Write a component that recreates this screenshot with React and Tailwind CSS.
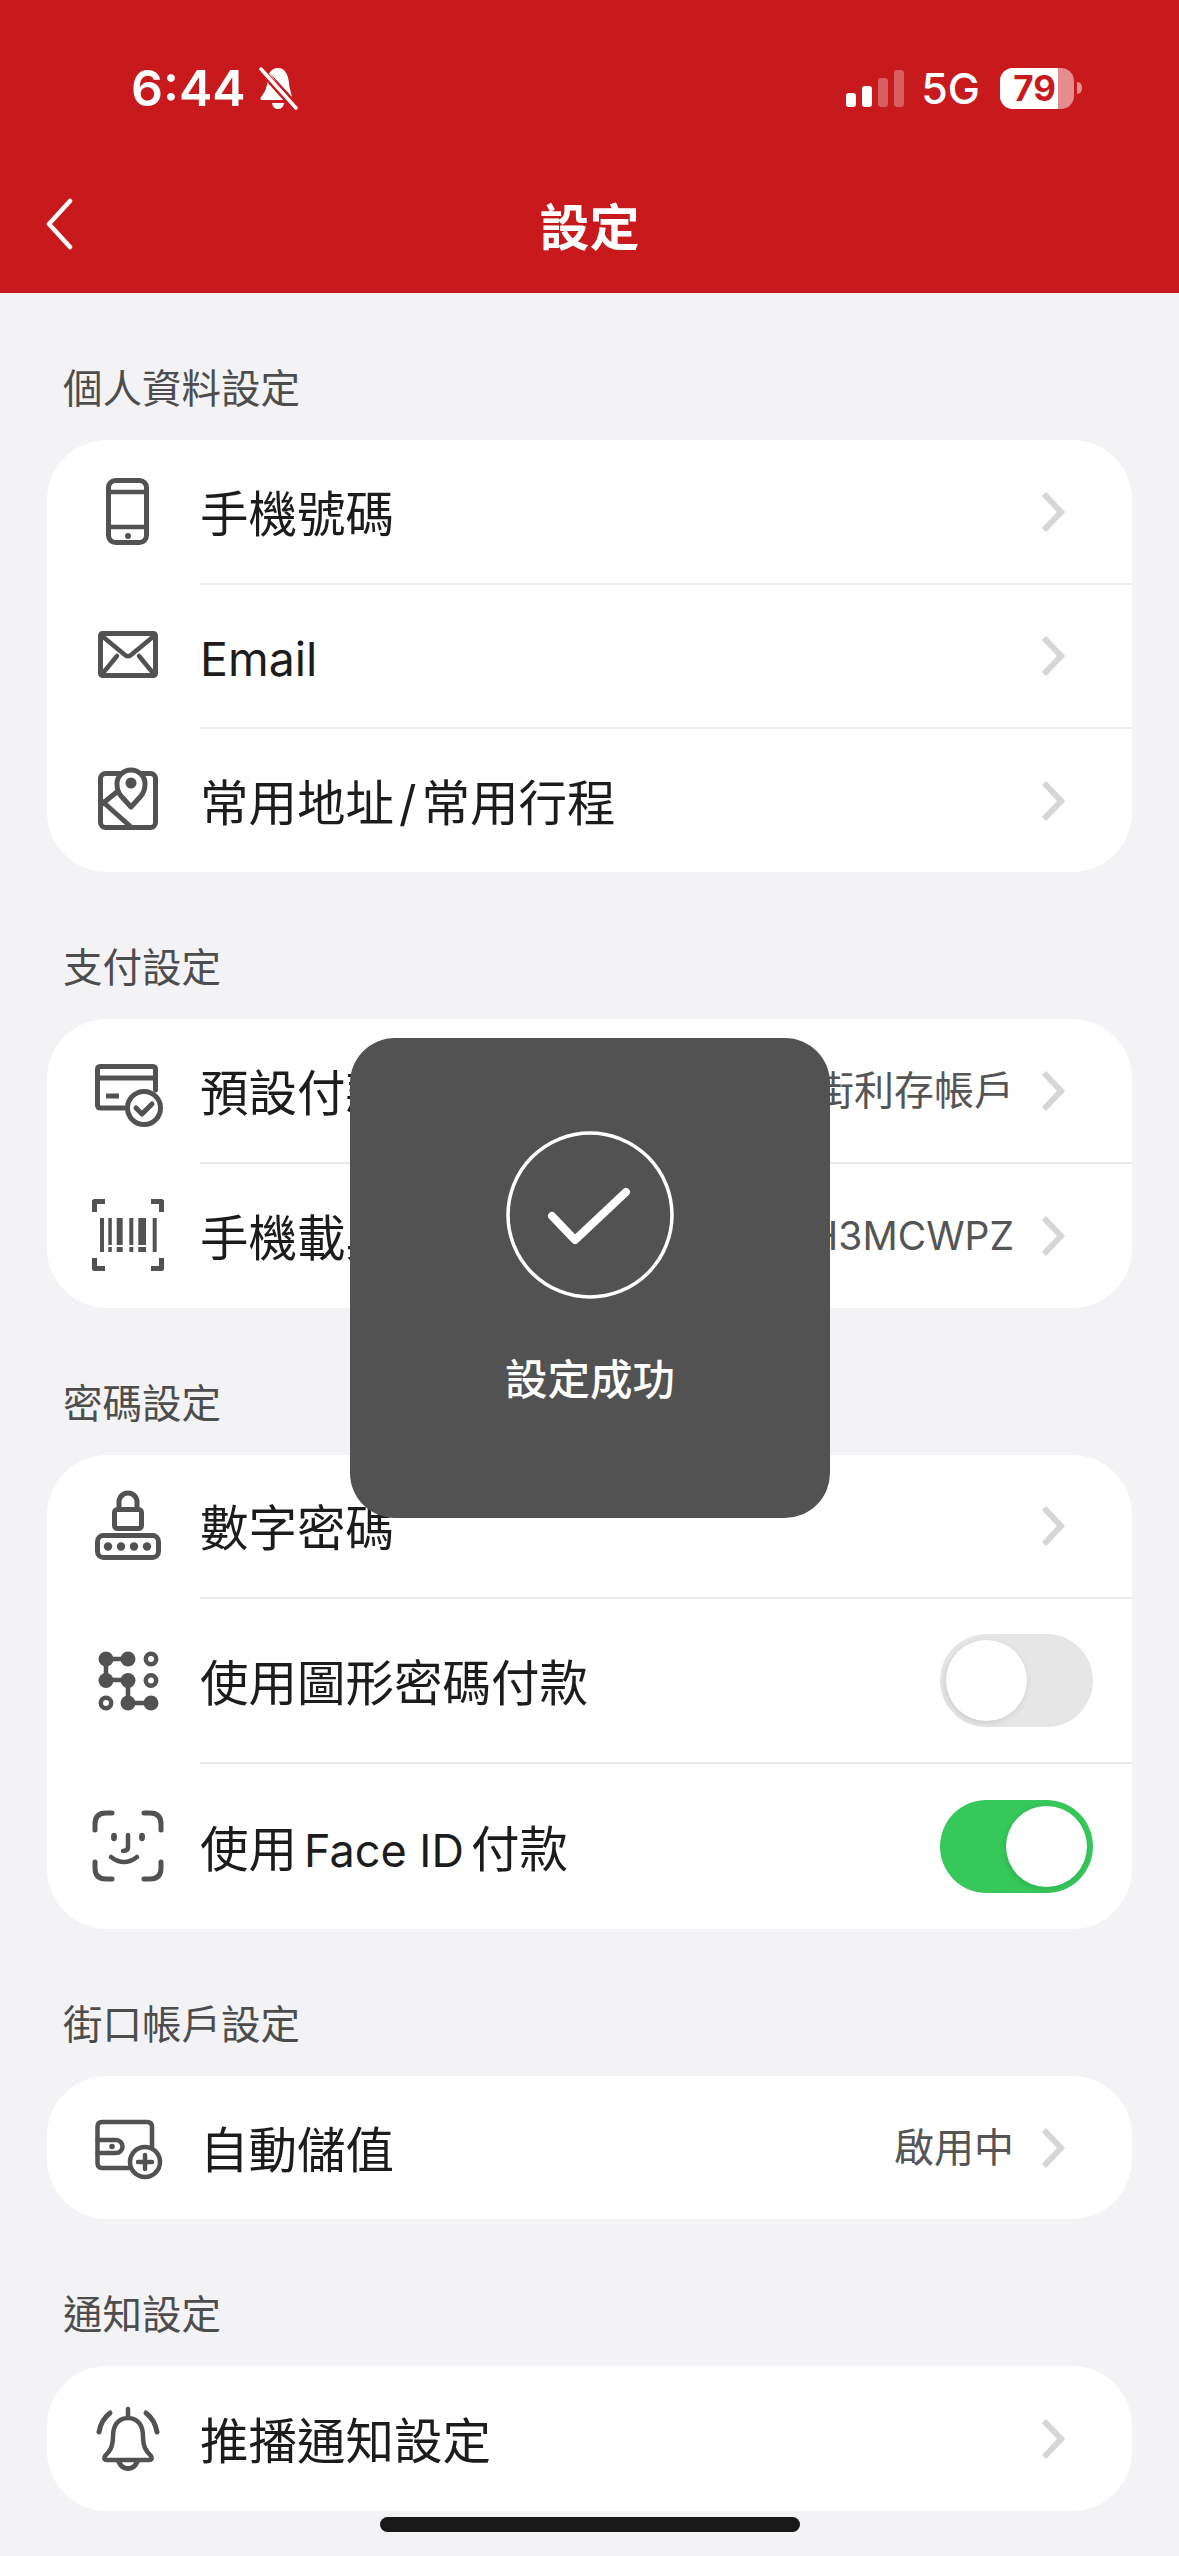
const Svg = ({ children }) => (
  <svg
    width="72"
    height="72"
    viewBox="0 0 72 72"
    fill="none"
    stroke="#525252"
    strokeWidth="5"
    strokeLinecap="round"
    strokeLinejoin="round"
  >
    {children}
  </svg>
);

const PhoneIcon = () => (
  <Svg>
    <rect x="16.5" y="4.5" width="38" height="62" rx="7" />
    <path d="M17 16H54M17 51H54" strokeLinecap="butt" strokeWidth="4.5" />
    <circle cx="36" cy="60" r="3" fill="#525252" stroke="none" />
  </Svg>
);

const MailIcon = () => (
  <Svg>
    <rect x="8.5" y="14.5" width="55" height="42" rx="2" />
    <path d="M10 17L33 36Q36 38.500 39 36L62 17M11 54L25 37M61 54L47 37" strokeWidth="4.500" />
  </Svg>
);

const MapIcon = () => (
  <Svg>
    <rect x="8.500" y="9.500" width="55" height="54" rx="5" />
    <path
      d="M39 43L29 32Q25 27 25 20A14 14 0 0 1 53 20Q53 27 49 32Z"
      fill="#fff"
    />
    <circle cx="39" cy="19" r="5.500" fill="#525252" stroke="none" />
    <path d="M10 40L26 27M11 38L39 63" />
  </Svg>
);

const CardCheckIcon = () => (
  <Svg>
    <path d="M36 53H9Q5.500 53 5.500 50V14Q5.500 11.500 9 11.500H60Q63.500 11.500 63.500 14V35" />
    <path d="M6 23H63M14 41H27" strokeLinecap="butt" />
    <circle cx="52" cy="53" r="16.500" fill="#fff" />
    <path d="M44 53L50 59L60 49" />
  </Svg>
);

const BarcodeIcon = () => (
  <Svg>
    <path d="M2.500 13V2.500H13M59 2.500H69.500V13M2.500 59V69.500H13M59 69.500H69.500V59" strokeLinecap="butt" />
    <g fill="#525252" stroke="none">
      <rect x="8" y="19" width="4" height="34" />
      <rect x="16.300" y="19" width="3.500" height="27" />
      <rect x="16.300" y="48" width="3.500" height="5" />
      <rect x="24.700" y="19" width="6" height="27" />
      <rect x="24.700" y="48" width="6" height="5" />
      <rect x="37.300" y="19" width="4" height="27" />
      <rect x="37.300" y="48" width="4" height="5" />
      <rect x="46.300" y="19" width="7.700" height="27" />
      <rect x="46.300" y="48" width="7.700" height="5" />
      <rect x="60.700" y="19" width="4" height="34" />
    </g>
  </Svg>
);

const LockIcon = () => (
  <Svg>
    <path d="M27 19V12A9 9 0 0 1 45 12V19" />
    <rect x="22.500" y="19.500" width="27" height="19" rx="3" />
    <rect x="5.500" y="45.500" width="61" height="22" rx="6" />
    <g fill="#525252" stroke="none">
      <circle cx="16" cy="56.500" r="4.200" />
      <circle cx="29" cy="56.500" r="4.200" />
      <circle cx="42" cy="56.500" r="4.200" />
      <circle cx="55" cy="56.500" r="4.200" />
    </g>
  </Svg>
);

const PatternIcon = () => (
  <Svg>
    <path d="M14 15H36M14 15V36H36V59H59" strokeWidth="4.500" />
    <g fill="#525252" stroke="none">
      <circle cx="14" cy="15" r="7.500" />
      <circle cx="36" cy="15" r="7.500" />
      <circle cx="14" cy="36.500" r="7.500" />
      <circle cx="36" cy="36.500" r="7.500" />
      <circle cx="36" cy="59" r="7.500" />
      <circle cx="59" cy="59" r="7.500" />
    </g>
    <circle cx="59" cy="15" r="5.200" strokeWidth="4.500" />
    <circle cx="59" cy="36.500" r="5.200" strokeWidth="4.500" />
    <circle cx="14" cy="59" r="5.200" strokeWidth="4.500" />
  </Svg>
);

const FaceIcon = () => (
  <Svg>
    <path d="M3 20V14Q3 3 14 3H20M52 3H58Q69 3 69 14V20M3 52V58Q3 69 14 69H20M52 69H58Q69 69 69 58V52" />
    <ellipse cx="22" cy="27" rx="3" ry="4.200" fill="#525252" stroke="none" />
    <ellipse cx="50" cy="27" rx="3" ry="4.200" fill="#525252" stroke="none" />
    <path d="M36 25V37Q36 41 31 41M19 47Q32 57 45 47" strokeWidth="4.500" />
  </Svg>
);

const WalletPlusIcon = () => (
  <Svg>
    <path d="M37 56H10Q5.500 56 5.500 51V15Q5.500 10 10 10H55Q60 10 60 15V35" strokeWidth="4.500" />
    <path d="M5.500 28H24A6.500 6.500 0 0 1 24 41H5.500" strokeWidth="4.500" />
    <circle cx="20" cy="34.500" r="2.800" fill="#525252" stroke="none" />
    <circle cx="53" cy="50" r="15" fill="#fff" strokeWidth="4.500" />
    <path d="M53 43V57M46 50H60" strokeWidth="4.500" />
  </Svg>
);

const BellIcon = () => (
  <Svg>
    <path d="M36 6V15M36 15C25 15 21 24 21 33C21 44 18 48 13 53Q11 57 15 57H57Q61 57 59 53C54 48 51 44 51 33C51 24 47 15 36 15Z" strokeWidth="4.500" />
    <path d="M27 59A9.500 9.500 0 0 0 45 59M7 29Q9 17 18 10M65 29Q63 17 54 10" />
  </Svg>
);

const Chevron = () => (
  <svg width="24" height="42" viewBox="0 0 24 42" fill="none" stroke="#d6d6d6" strokeWidth="6">
    <path d="M3 3L20 21L3 39" />
  </svg>
);

const Toggle = ({ on }) => (
  <div
    className={`flex h-[93px] w-[153px] items-center rounded-full px-[6px] ${
      on ? "justify-end bg-[#36c85b]" : "justify-start bg-[#e6e6e6]"
    }`}
  >
    <div className="h-[81px] w-[81px] rounded-full bg-white shadow-[-1px_2px_6px_rgba(0,0,0,0.12)]" />
  </div>
);

const Row = ({ icon, label, value, toggle, height, first }) => (
  <div className="flex items-stretch" style={{ height }}>
    <div className="ml-[45px] mr-[36px] flex w-[72px] items-center">{icon}</div>
    <div
      className={`flex flex-1 items-center justify-between ${
        first ? "" : "border-t-2 border-[#ececec]"
      }`}
    >
      <span className="pt-[7px] text-[48.5px] leading-none text-[#1c1c1c]">{label}</span>
      {toggle === undefined ? (
        <div className="mr-[67px] flex items-center">
          {value && (
            <span className="mr-[27px] text-[40px] leading-none text-[#555]">{value}</span>
          )}
          <Chevron />
        </div>
      ) : (
        <div className="mr-[39px]">
          <Toggle on={toggle} />
        </div>
      )}
    </div>
  </div>
);

const sections = [
  {
    title: "個人資料設定",
    rows: [
      { icon: <PhoneIcon />, label: "手機號碼", height: 143 },
      { icon: <MailIcon />, label: <span className="text-[46.5px]">Email</span>, height: 144 },
      {
        icon: <MapIcon />,
        label: (
          <>
            常用地址<span className="mx-[5px]">/</span>常用行程
          </>
        ),
        height: 145,
      },
    ],
  },
  {
    title: "支付設定",
    rows: [
      { icon: <CardCheckIcon />, label: "預設付款方式", value: "街利存帳戶", height: 143 },
      {
        icon: <BarcodeIcon />,
        label: "手機載具",
        value: <span className="text-[39px]">/H3MCWPZ</span>,
        height: 146,
      },
    ],
  },
  {
    title: "密碼設定",
    rows: [
      { icon: <LockIcon />, label: "數字密碼", height: 142 },
      { icon: <PatternIcon />, label: "使用圖形密碼付款", toggle: false, height: 165 },
      {
        icon: <FaceIcon />,
        label: (
          <>
            使用<span className="ml-[7px] mr-[7px] text-[45px]">Face ID</span>付款
          </>
        ),
        toggle: true,
        height: 167,
      },
    ],
  },
  {
    title: "街口帳戶設定",
    rows: [{ icon: <WalletPlusIcon />, label: "自動儲值", value: "啟用中", height: 143 }],
  },
  {
    title: "通知設定",
    rows: [{ icon: <BellIcon />, label: "推播通知設定", height: 145 }],
  },
];

const StatusBar = () => (
  <div className="flex items-center justify-between pl-[131px] pr-[97px] pt-[66px] text-white">
    <div className="flex items-center">
      <span className="text-[50px] font-semibold leading-[44px]">6:44</span>
      <svg className="ml-[12px]" width="41" height="43" viewBox="0 0 41 43" fill="#fff">
        <path d="M20 1C13 1 10 7 9.500 13C9 21 7 25 3 30Q1.500 33 4 33H31L12 6L34 30Q33 26 31.500 20C31 12 29 1 20 1Z" />
        <path d="M14 36H26Q25 42 20 42Q15 42 14 36Z" />
        <path d="M3 3L37 41" stroke="#c8191c" strokeWidth="7" />
        <path d="M3 2L38 41" stroke="#fff" strokeWidth="3.500" strokeLinecap="round" />
      </svg>
    </div>
    <div className="flex items-center">
      <div className="flex items-end gap-[6px]">
        <div className="h-[14px] w-[10px] rounded-[3px] bg-white" />
        <div className="h-[21px] w-[10px] rounded-[3px] bg-white" />
        <div className="h-[29px] w-[10px] rounded-[3px] bg-white/30" />
        <div className="h-[37px] w-[10px] rounded-[3px] bg-white/30" />
      </div>
      <span className="ml-[17px] mr-[20px] text-[43px] font-medium leading-[44px]">5G</span>
      <div className="flex items-center">
        <div className="relative h-[41px] w-[74px] overflow-hidden rounded-[13px] bg-white/50">
          <div className="flex h-full w-[58px] items-center justify-end bg-white pr-[2px] text-[35px] font-bold leading-none text-[#c8191c]">
            79
          </div>
        </div>
        <div className="ml-[3px] h-[12px] w-[5px] rounded-r-full bg-white/50" />
      </div>
    </div>
  </div>
);

export default function App() {
  return (
    <div className="relative h-[2556px] w-[1179px] overflow-hidden bg-[#f3f3f5] font-['Inter','Noto_Sans_CJK_TC',sans-serif]">
      <header className="h-[293px] bg-[#c8191c]">
        <StatusBar />
        <div className="relative mt-[86px] flex items-center justify-center">
          <svg className="absolute left-[44px] top-[2px]" width="30" height="52" viewBox="0 0 30 52" fill="none" stroke="#fff" strokeWidth="4.500" strokeLinecap="round" strokeLinejoin="round">
            <path d="M26 3L5 26L26 49" />
          </svg>
          <h1 className="pt-[7px] text-[50px] font-bold leading-[50px] text-white">設定</h1>
        </div>
      </header>

      <main className="flex flex-col px-[47px]">
        {sections.map((section, i) => (
          <section key={i} className="pt-[76px]">
            <h2 className="mb-[31px] ml-[16px] text-[39.5px] font-normal leading-[40px] text-[#4d4d4d]">
              {section.title}
            </h2>
            <div className="overflow-hidden rounded-[60px] bg-white">
              {section.rows.map((row, j) => (
                <Row key={j} {...row} first={j === 0} />
              ))}
            </div>
          </section>
        ))}
      </main>

      {/* 設定成功 toast */}
      <div className="absolute left-[350px] top-[1038px] flex h-[480px] w-[480px] flex-col items-center rounded-[45px] bg-[#525252] pt-[93px]">
        <svg width="168" height="168" viewBox="0 0 168 168" fill="none" stroke="#fff" strokeLinecap="round" strokeLinejoin="round">
          <circle cx="84" cy="84" r="82" strokeWidth="3.500" />
          <path d="M46 85L69 109L120 61" strokeWidth="8" />
        </svg>
        <p className="mt-[59px] text-[42.5px] font-medium leading-[44px] text-white">設定成功</p>
      </div>

      <div className="absolute left-[380px] top-[2517px] h-[15px] w-[420px] rounded-full bg-[#181818]" />
    </div>
  );
}
